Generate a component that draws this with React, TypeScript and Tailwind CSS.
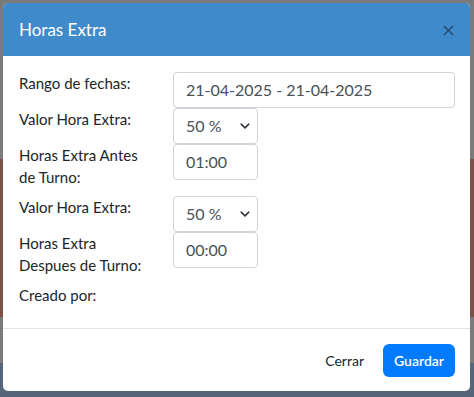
import React from "react";

function Chevron() {
    return (
        <svg width="10" height="10" viewBox="0 0 16 16" className="text-[#343a40]">
            <path d="M2 5l6 6 6-6" fill="none" stroke="currentColor" strokeWidth="2.6" strokeLinecap="round" strokeLinejoin="round" />
        </svg>
    );
}

function Row({label, children}: {label: React.ReactNode; children?: React.ReactNode}) {
    return (
        <div className="flex">
            <div className="w-[154px] shrink-0 leading-[22px] pb-2">{label}</div>
            <div className="flex-1">{children}</div>
        </div>
    );
}

function SelectBox() {
    return (
        <div className="w-[85px] h-[36px] border border-[#ced4da] rounded-[4px] flex items-center justify-between pl-[12px] pr-[7px] text-[16px] text-[#495057]">
            <span>50 %</span>
            <Chevron />
        </div>
    );
}

function TimeBox({value}: {value: string}) {
    return (
        <div className="w-[85px] h-[36px] border border-[#ced4da] rounded-[4px] flex items-center pl-[12px] text-[16px] text-[#495057]">
            {value}
        </div>
    );
}

export default function App() {
    return (
        <div
            className="w-[474px] h-[397px] pt-[3px] pl-[3px]"
            style={{background: "linear-gradient(to bottom, #7b7b7b 0 159px, #7a5248 159px 317px, #7b7b7b 317px 363px, #56667a 363px)"}}
        >
            <div className="w-[467px] h-[388px] bg-white rounded-[5px] overflow-hidden flex flex-col font-['Lato',sans-serif] text-[15px] text-[#212529]">
                {/* header */}
                <div className="h-[53px] bg-[#3f8aca] flex items-center justify-between pl-[16px] pr-[16px] shrink-0">
                    <span className="text-white text-[17px]">Horas Extra</span>
                    <svg width="11" height="11" viewBox="0 0 12 12" className="text-[#24486c] mt-[2px]">
                        <path d="M1 1l10 10M11 1L1 11" stroke="currentColor" strokeWidth="1.5" />
                    </svg>
                </div>

                {/* body */}
                <div className="flex-1 pt-[16px] pl-[16px] pr-[15px]">
                    <Row label="Rango de fechas:">
                        <div className="h-[36px] border border-[#ced4da] rounded-[4px] flex items-center pl-[12px] text-[16px] text-[#495057]">
                            21-04-2025 - 21-04-2025
                        </div>
                    </Row>
                    <Row label="Valor Hora Extra:"><SelectBox /></Row>
                    <Row label={<>Horas Extra Antes<br />de Turno:</>}><TimeBox value="01:00" /></Row>
                    <Row label="Valor Hora Extra:"><SelectBox /></Row>
                    <Row label={<>Horas Extra<br />Despues de Turno:</>}><TimeBox value="00:00" /></Row>
                    <Row label="Creado por:" />
                </div>

                {/* footer */}
                <div className="h-[63px] border-t border-[#e2e5e8] flex items-center justify-end gap-[19px] pr-[15px] shrink-0">
                    <span className="text-[14px] text-[#212529]">Cerrar</span>
                    <button className="w-[72px] h-[33px] rounded-[6px] bg-[#007bff] text-white text-[14px] font-semibold">Guardar</button>
                </div>
            </div>
        </div>
    );
}
